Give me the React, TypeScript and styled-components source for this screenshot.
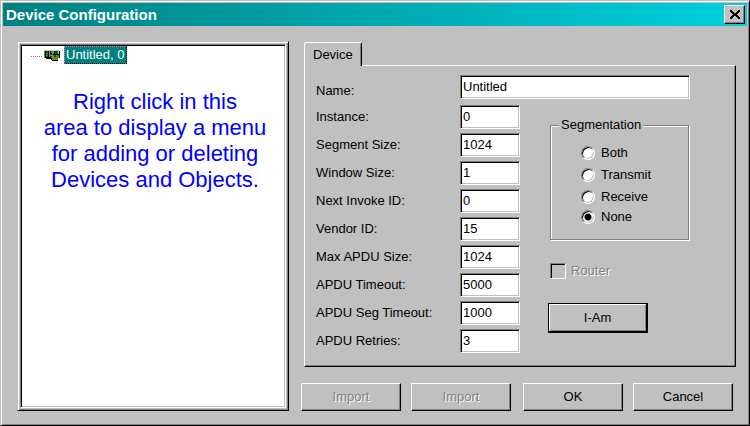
import React, { useState } from "react";
import styled, { createGlobalStyle, css } from "styled-components";

const FACE = "#c0c0c0";
const SHADOW = "#808080";
const TEAL = "#008080";

const GlobalStyle = createGlobalStyle`
  *, *::before, *::after { box-sizing: border-box; }
  body { margin: 0; background: ${FACE}; }
  body, button, input {
    font-family: "Liberation Sans", Arial, sans-serif;
    font-size: 13px;
    line-height: 16px;
    color: #000;
  }
`;

const sunken = css`
  border: 1px solid;
  border-color: ${SHADOW} #fff #fff ${SHADOW};
  box-shadow: inset 1px 1px 0 #000, inset -1px -1px 0 ${FACE};
`;

const Window = styled.div`
  display: flex;
  flex-direction: column;
  min-height: 100vh;
  padding: 2px;
  background: ${FACE};
  border: 1px solid;
  border-color: ${FACE} #000 #000 ${FACE};
  box-shadow: inset 1px 1px 0 #fff, inset -1px -1px 0 ${SHADOW};
`;

const TitleBar = styled.header`
  display: flex;
  align-items: center;
  justify-content: space-between;
  height: 23px;
  padding: 0 2px 0 3px;
  background: linear-gradient(to right, ${TEAL}, #00d0e0);
`;

const Title = styled.h1`
  margin: 0;
  font-size: 15px;
  line-height: 23px;
  font-weight: bold;
  color: #fff;
`;

const CloseButton = styled.button`
  display: flex;
  align-items: center;
  justify-content: center;
  width: 21px;
  height: 19px;
  padding: 0;
  background: ${FACE};
  border: 1px solid;
  border-color: #fff #000 #000 #fff;
  box-shadow: inset -1px -1px 0 ${SHADOW};
`;

const Main = styled.main`
  flex: 1;
  display: grid;
  grid-template-columns: 272fr 435fr;
  gap: 12px;
  padding: 15px 11px 12px 14px;
`;

const TreeFrame = styled.section`
  display: flex;
  padding: 2px;
  border: 1px solid;
  border-color: ${FACE} #000 #000 ${FACE};
  box-shadow: inset 1px 1px 0 #fff, inset -1px -1px 0 ${SHADOW};
`;

const TreePane = styled.div`
  ${sunken}
  flex: 1;
  padding: 1px;
  background: #fff;
`;

const TreeItem = styled.div`
  display: flex;
  align-items: center;
  height: 18px;
  padding-left: 9px;
`;

const Branch = styled.span`
  width: 11px;
  margin: 2px 2px 0 0;
  border-top: 1px dotted ${SHADOW};
`;

const TreeLabel = styled.button`
  height: 18px;
  margin-left: 4px;
  padding: 0 1px;
  background: ${TEAL};
  color: #fff;
  border: 1px dotted;
  border-color: #ff7f7f #000 #000 #ff7f7f;
`;

const Help = styled.p`
  margin: 25px 0 0 4px;
  font-size: 22px;
  line-height: 26px;
  text-align: center;
  color: #0000ff;
`;

const RightColumn = styled.div`
  display: flex;
  flex-direction: column;
  min-width: 0;
  padding-top: 1px;
`;

const TabList = styled.div`
  display: flex;
  margin-left: 3px;
`;

const Tab = styled.button`
  height: 24px;
  margin-bottom: -1px;
  padding: 0 8px;
  background: ${FACE};
  border: 1px solid;
  border-color: #fff #000 ${FACE} #fff;
  border-bottom: 0;
  border-radius: 3px 2px 0 0;
  box-shadow: inset -1px 0 0 ${SHADOW};
  z-index: 1;
`;

const TabPage = styled.div`
  flex: 1;
  margin-left: 3px;
  padding: 9px 1px 12px 11px;
  border: 1px solid;
  border-color: #fff #000 #000 #fff;
  box-shadow: inset -1px -1px 0 ${SHADOW};
`;

const Columns = styled.div`
  display: flex;
  gap: 28px;
  margin-top: 6px;
`;

const Fields = styled.div`
  display: flex;
  flex-direction: column;
  gap: 4px;
`;

const FieldRow = styled.div<{ $wide?: boolean }>`
  display: flex;
  align-items: ${(p) => (p.$wide ? "flex-end" : "center")};
  padding-right: ${(p) => (p.$wide ? 44 : 0)}px;
`;

const FieldLabel = styled.label`
  flex: 0 0 144px;
`;

const TextInput = styled.input<{ $wide?: boolean }>`
  ${sunken}
  ${(p) => (p.$wide ? "flex: 1; min-width: 0;" : "width: 60px;")}
  height: 24px;
  padding: 0 2px 2px;
  background: #fff;
  border-radius: 0;
  outline: none;
`;

const Options = styled.div`
  display: flex;
  flex-direction: column;
  align-items: flex-start;
  padding-top: 12px;
`;

const Group = styled.fieldset`
  width: 139px;
  height: 123px;
  margin: 0 0 23px 2px;
  padding: 9px 0 0 30px;
  border: 1px solid ${SHADOW};
  box-shadow: inset 1px 1px 0 #fff, 1px 1px 0 #fff;
`;

const Legend = styled.legend`
  margin-left: -22px;
  padding: 0 2px;
  background: ${FACE};
`;

const RadioRow = styled.label`
  display: flex;
  align-items: center;
  gap: 6px;
  height: 22px;
  &:last-child { height: 18px; }
`;

const Radio = styled.input`
  appearance: none;
  width: 14px;
  height: 14px;
  margin: 0;
  border: 1px solid;
  border-color: ${SHADOW} #fff #fff ${SHADOW};
  border-radius: 50%;
  background: #fff;
  box-shadow: inset 1px 1px 0 #000, inset -1px -1px 0 ${FACE};
  outline: none;
  &:checked { background: radial-gradient(circle, #000 0 3px, #fff 4px); }
`;

const CheckRow = styled.label`
  display: flex;
  align-items: center;
  gap: 5px;
  margin: 0 0 24px 2px;
  color: ${SHADOW};
  text-shadow: 1px 1px 0 #fff;
`;

const CheckBox = styled.input`
  ${sunken}
  appearance: none;
  width: 16px;
  height: 16px;
  margin: 0;
  background: ${FACE};
`;

const PushButton = styled.button<{ $default?: boolean }>`
  flex: 1;
  height: 28px;
  padding: 0;
  background: ${FACE};
  border: 1px solid;
  border-color: #fff #000 #000 #fff;
  box-shadow: inset -1px -1px 0 ${SHADOW};
  &:disabled { color: ${SHADOW}; text-shadow: 1px 1px 0 #fff; }
  ${(p) =>
    p.$default &&
    css`
      flex: none;
      width: 100px;
      height: 30px;
      border-color: #000;
      border-width: 1px 2px 2px 1px;
      box-shadow: inset 1px 1px 0 #fff, inset -1px -1px 0 ${SHADOW};
    `}
`;

const Footer = styled.footer`
  display: flex;
  gap: 12px;
  padding: 16px 3px 0 0;
`;

const ButtonPair = styled.div`
  flex: 1;
  display: flex;
  gap: 10px;
`;

const BoardIcon = () => (
  <svg width="16" height="13" viewBox="0 0 16 13" shapeRendering="crispEdges" aria-hidden="true">
    <path fill="#808080" d="M0 1h15v8H0z" />
    <path fill="#c0c0c0" d="M0 1h15v1H0zM14 2h1v3h-1z" />
    <path fill="#000" d="M1 2h1v7H1zM4 2h1v7H4zM1 8h6v1H1zM6 4h2v1H6zM10 2h1v4h-1zM9 5h6v1H9zM2 9h7v1H2zM15 2h1v7h-1zM7 10h2v1H7zM8 11h6v1H8z" />
    <path fill="#006000" d="M2 2h2v2H2zM2 5h2v1H2zM2 7h2v1H2zM6 2h2v2H6zM6 5h2v1H6zM6 7h2v1H6zM10 6h2v2h-2zM11 2h3v3h-3z" />
    <path fill="#00a000" d="M13 3h1v1h-1zM9 4h1v1H9zM13 6h1v2h-1zM3 6h1v1H3zM7 3h1v1H7z" />
    <path fill="#808000" d="M8 9h6v2H8zM10 8h5v1h-5z" />
  </svg>
);

const CloseIcon = () => (
  <svg width="10" height="9" viewBox="0 0 10 9" shapeRendering="crispEdges" aria-hidden="true">
    <path d="M0 0h2v1H0zM8 0h2v1H8zM0 1h3v1H0zM7 1h3v1H7zM1 2h3v1H1zM6 2h3v1H6zM2 3h6v1H2zM3 4h4v1H3zM2 5h6v1H2zM1 6h3v1H1zM6 6h3v1H6zM0 7h3v1H0zM7 7h3v1H7zM0 8h2v1H0zM8 8h2v1H8z" />
  </svg>
);

const FIELDS = [
  { id: "instance", label: "Instance:", value: "0" },
  { id: "segment-size", label: "Segment Size:", value: "1024" },
  { id: "window-size", label: "Window Size:", value: "1" },
  { id: "next-invoke", label: "Next Invoke ID:", value: "0" },
  { id: "vendor", label: "Vendor ID:", value: "15" },
  { id: "max-apdu", label: "Max APDU Size:", value: "1024" },
  { id: "apdu-timeout", label: "APDU Timeout:", value: "5000" },
  { id: "seg-timeout", label: "APDU Seg Timeout:", value: "1000" },
  { id: "retries", label: "APDU Retries:", value: "3" },
];

const SEGMENTATION = ["Both", "Transmit", "Receive", "None"];

export default function App() {
  const [segmentation, setSegmentation] = useState("None");

  return (
    <>
      <GlobalStyle />
      <Window>
        <TitleBar>
          <Title>Device Configuration</Title>
          <CloseButton type="button" aria-label="Close">
            <CloseIcon />
          </CloseButton>
        </TitleBar>
        <Main>
          <TreeFrame>
            <TreePane>
              <TreeItem>
                <Branch />
                <BoardIcon />
                <TreeLabel type="button">Untitled, 0</TreeLabel>
              </TreeItem>
              <Help>
                Right click in this
                <br />
                area to display a menu
                <br />
                for adding or deleting
                <br />
                Devices and Objects.
              </Help>
            </TreePane>
          </TreeFrame>
          <RightColumn>
            <TabList role="tablist">
              <Tab type="button" role="tab" aria-selected="true">
                Device
              </Tab>
            </TabList>
            <TabPage role="tabpanel">
              <FieldRow $wide>
                <FieldLabel htmlFor="name">Name:</FieldLabel>
                <TextInput $wide id="name" defaultValue="Untitled" />
              </FieldRow>
              <Columns>
                <Fields>
                  {FIELDS.map((f) => (
                    <FieldRow key={f.id}>
                      <FieldLabel htmlFor={f.id}>{f.label}</FieldLabel>
                      <TextInput id={f.id} defaultValue={f.value} />
                    </FieldRow>
                  ))}
                </Fields>
                <Options>
                  <Group>
                    <Legend>Segmentation</Legend>
                    {SEGMENTATION.map((s) => (
                      <RadioRow key={s}>
                        <Radio
                          type="radio"
                          name="segmentation"
                          checked={segmentation === s}
                          onChange={() => setSegmentation(s)}
                        />
                        {s}
                      </RadioRow>
                    ))}
                  </Group>
                  <CheckRow>
                    <CheckBox type="checkbox" disabled />
                    Router
                  </CheckRow>
                  <PushButton $default type="button">
                    I-Am
                  </PushButton>
                </Options>
              </Columns>
            </TabPage>
            <Footer>
              <ButtonPair>
                <PushButton type="button" disabled>Import</PushButton>
                <PushButton type="button" disabled>Import</PushButton>
              </ButtonPair>
              <ButtonPair>
                <PushButton type="button">OK</PushButton>
                <PushButton type="button">Cancel</PushButton>
              </ButtonPair>
            </Footer>
          </RightColumn>
        </Main>
      </Window>
    </>
  );
}
